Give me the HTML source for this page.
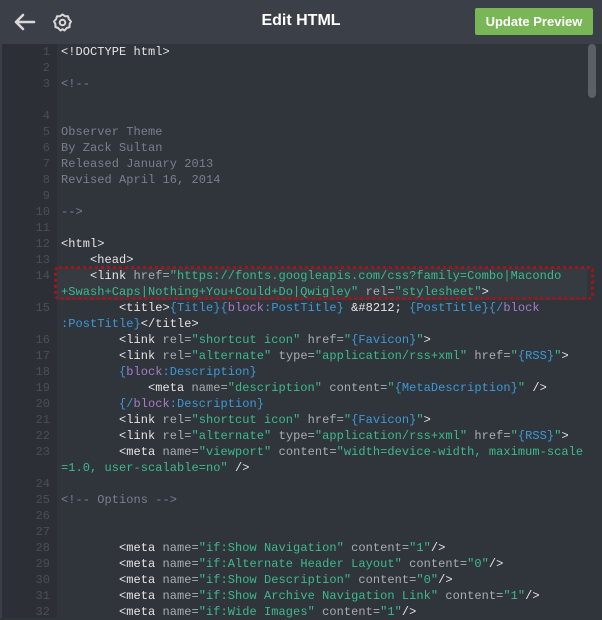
<!DOCTYPE html>
<html><head><style>
*{margin:0;padding:0;box-sizing:border-box}
body{width:602px;height:618px;overflow:hidden;background:#30343b;font-family:"Liberation Sans",sans-serif;position:relative}
.hdr{position:absolute;left:0;top:0;width:602px;height:44px;background:#3b3f47}
.title{position:absolute;left:0;width:602px;top:12px;text-align:center;color:#fff;font-weight:bold;font-size:16px}
.btn{position:absolute;left:475px;top:8px;width:118px;height:27px;background:#79b655;border-radius:2px;color:#fff;font-weight:bold;font-size:13px;text-align:center;line-height:27px}
.gut{position:absolute;left:2px;top:44px;width:55px;height:574px;background:#2c3036}
.lb{position:absolute;left:0;top:44px;width:2px;height:574px;background:#3b3f47}
.sb{position:absolute;left:588px;top:44px;width:8px;height:54px;background:#5b6067;border-radius:4px}
.hl{position:absolute;left:57px;top:268px;width:530px;height:32px;background:#363a41}
.box{position:absolute;left:54px;top:266px;width:540px;height:34px;border:3px dotted #a3151b;border-radius:5px}
.r{position:absolute;left:0;height:16px;line-height:16px;font-family:"Liberation Mono",monospace;font-size:12px;white-space:pre;color:#e4e4e4;letter-spacing:0.05px}
.n{position:absolute;left:0;width:50px;text-align:right;color:#4a4f56}
.x{position:absolute;left:61px}
.a{color:#a9adb3}.s{color:#3dbb8a}.b{color:#3d9ad6}.p{color:#a77bc8}.c{color:#7b8088}
</style></head><body>
<div class="hdr">
<svg style="position:absolute;left:12px;top:12px" width="24" height="20" viewBox="0 0 24 20"><path d="M22 10H4M11 3L4 10L11 17" stroke="#d8d8d8" stroke-width="2.6" fill="none" stroke-linecap="round" stroke-linejoin="round"/></svg>
<svg style="position:absolute;left:52px;top:12px" width="21" height="21" viewBox="0 0 21 21"><path d="M10.5 2.5 L13 4.2 L16 4.2 L16.8 7 L19 9.5 L17.6 12 L17.6 15 L14.8 16 L12.5 18.5 L10.5 17.2 L8.5 18.5 L6.2 16 L3.4 15 L3.4 12 L2 9.5 L4.2 7 L5 4.2 L8 4.2 Z" stroke="#d8d8d8" stroke-width="2" fill="none" stroke-linejoin="round"/><circle cx="10.5" cy="10.5" r="2.8" stroke="#d8d8d8" stroke-width="2" fill="none"/></svg>
<div class="title">Edit HTML</div>
<div class="btn">Update Preview</div>
</div>
<div class="lb"></div><div class="gut"></div>
<div class="hl"></div>
<div class="sb"></div>

<div class="r" style="top:44px"><span class="n">1</span><span class="x">&lt;!DOCTYPE html&gt;</span></div>
<div class="r" style="top:60px"><span class="n">2</span></div>
<div class="r" style="top:76px"><span class="n">3</span><span class="x c">&lt;!--</span></div>
<div class="r" style="top:108px"><span class="n">4</span></div>
<div class="r" style="top:124px"><span class="n">5</span><span class="x c">Observer Theme</span></div>
<div class="r" style="top:140px"><span class="n">6</span><span class="x c">By Zack Sultan</span></div>
<div class="r" style="top:156px"><span class="n">7</span><span class="x c">Released January 2013</span></div>
<div class="r" style="top:172px"><span class="n">8</span><span class="x c">Revised April 16, 2014</span></div>
<div class="r" style="top:188px"><span class="n">9</span></div>
<div class="r" style="top:204px"><span class="n">10</span><span class="x c">--&gt;</span></div>
<div class="r" style="top:220px"><span class="n">11</span></div>
<div class="r" style="top:236px"><span class="n">12</span><span class="x">&lt;html&gt;</span></div>
<div class="r" style="top:252px"><span class="n">13</span><span class="x">    &lt;head&gt;</span></div>
<div class="r" style="top:268px"><span class="n">14</span><span class="x">    &lt;link <span class="a">href=</span><span class="s">"https://fonts.googleapis.com/css?family=Combo|Macondo</span></span></div>
<div class="r" style="top:284px"><span class="x"><span class="s">+Swash+Caps|Nothing+You+Could+Do|Qwigley"</span> <span class="a">rel=</span><span class="s">"stylesheet"</span>&gt;</span></div>
<div class="r" style="top:300px"><span class="n">15</span><span class="x">        &lt;title&gt;<span class="b">{Title}{</span><span class="p">block</span><span class="b">:PostTitle}</span> &amp;#8212; <span class="b">{PostTitle}{/</span><span class="p">block</span></span></div>
<div class="r" style="top:316px"><span class="x"><span class="b">:PostTitle}</span>&lt;/title&gt;</span></div>
<div class="r" style="top:332px"><span class="n">16</span><span class="x">        &lt;link <span class="a">rel=</span><span class="s">"shortcut icon"</span> <span class="a">href=</span><span class="s">"</span><span class="b">{Favicon}</span><span class="s">"</span>&gt;</span></div>
<div class="r" style="top:348px"><span class="n">17</span><span class="x">        &lt;link <span class="a">rel=</span><span class="s">"alternate"</span> <span class="a">type=</span><span class="s">"application/rss+xml"</span> <span class="a">href=</span><span class="s">"</span><span class="b">{RSS}</span><span class="s">"</span>&gt;</span></div>
<div class="r" style="top:364px"><span class="n">18</span><span class="x">        <span class="b">{</span><span class="p">block</span><span class="b">:Description}</span></span></div>
<div class="r" style="top:380px"><span class="n">19</span><span class="x">            &lt;meta <span class="a">name=</span><span class="s">"description"</span> <span class="a">content=</span><span class="s">"</span><span class="b">{MetaDescription}</span><span class="s">"</span> /&gt;</span></div>
<div class="r" style="top:396px"><span class="n">20</span><span class="x">        <span class="b">{/</span><span class="p">block</span><span class="b">:Description}</span></span></div>
<div class="r" style="top:412px"><span class="n">21</span><span class="x">        &lt;link <span class="a">rel=</span><span class="s">"shortcut icon"</span> <span class="a">href=</span><span class="s">"</span><span class="b">{Favicon}</span><span class="s">"</span>&gt;</span></div>
<div class="r" style="top:428px"><span class="n">22</span><span class="x">        &lt;link <span class="a">rel=</span><span class="s">"alternate"</span> <span class="a">type=</span><span class="s">"application/rss+xml"</span> <span class="a">href=</span><span class="s">"</span><span class="b">{RSS}</span><span class="s">"</span>&gt;</span></div>
<div class="r" style="top:444px"><span class="n">23</span><span class="x">        &lt;meta <span class="a">name=</span><span class="s">"viewport"</span> <span class="a">content=</span><span class="s">"width=device-width, maximum-scale</span></span></div>
<div class="r" style="top:460px"><span class="x"><span class="s">=1.0, user-scalable=no"</span> /&gt;</span></div>
<div class="r" style="top:476px"><span class="n">24</span></div>
<div class="r" style="top:492px"><span class="n">25</span><span class="x c">&lt;!-- Options --&gt;</span></div>
<div class="r" style="top:508px"><span class="n">26</span></div>
<div class="r" style="top:524px"><span class="n">27</span></div>
<div class="r" style="top:540px"><span class="n">28</span><span class="x">        &lt;meta <span class="a">name=</span><span class="s">"if:Show Navigation"</span> <span class="a">content=</span><span class="s">"1"</span>/&gt;</span></div>
<div class="r" style="top:556px"><span class="n">29</span><span class="x">        &lt;meta <span class="a">name=</span><span class="s">"if:Alternate Header Layout"</span> <span class="a">content=</span><span class="s">"0"</span>/&gt;</span></div>
<div class="r" style="top:572px"><span class="n">30</span><span class="x">        &lt;meta <span class="a">name=</span><span class="s">"if:Show Description"</span> <span class="a">content=</span><span class="s">"0"</span>/&gt;</span></div>
<div class="r" style="top:588px"><span class="n">31</span><span class="x">        &lt;meta <span class="a">name=</span><span class="s">"if:Show Archive Navigation Link"</span> <span class="a">content=</span><span class="s">"1"</span>/&gt;</span></div>
<div class="r" style="top:604px"><span class="n">32</span><span class="x">        &lt;meta <span class="a">name=</span><span class="s">"if:Wide Images"</span> <span class="a">content=</span><span class="s">"1"</span>/&gt;</span></div>

<div class="box"></div>
</body></html>
